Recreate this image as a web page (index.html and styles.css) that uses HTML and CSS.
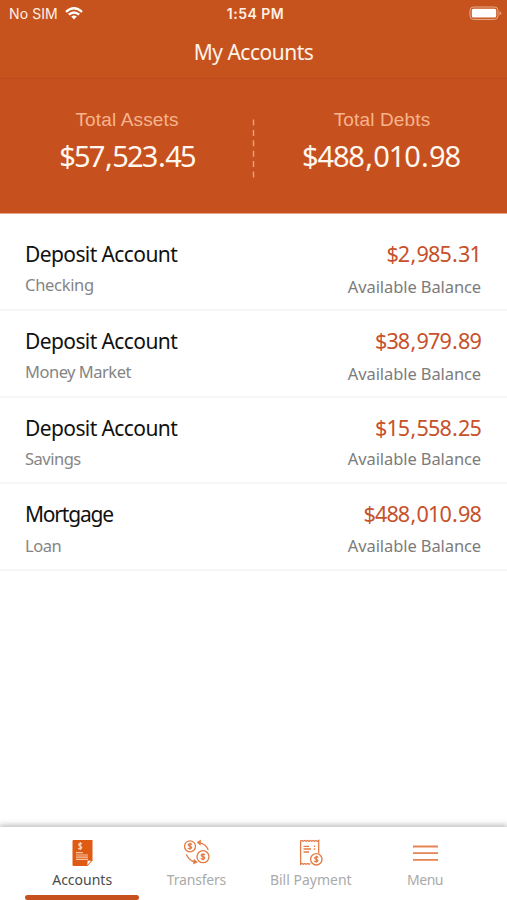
FILE: index.html
```html
<!DOCTYPE html>
<html lang="en">
<head>
<meta charset="utf-8">
<title>My Accounts</title>
<link rel="stylesheet" href="styles.css">
</head>
<body>
<div class="app">
  <header class="top">
    <div class="status">
      <div class="carrier"><span>No SIM</span>
        <svg class="wifi" width="18" height="13" viewBox="0 0 18 13" fill="none" stroke="#fff" stroke-width="2.3"><path d="M1 4.8Q9-2.2 17 4.8"/><path d="M3.8 7.7Q9 3.2 14.2 7.7"/><path d="M9 12.4 6.2 9.6Q9 7.4 11.8 9.6Z" fill="#fff" stroke="none"/></svg>
      </div>
      <div class="time">1:54 PM</div>
      <svg class="battery" width="33" height="15" viewBox="0 0 33 15"><rect x="1" y="1" width="28" height="12.4" rx="3.5" fill="none" stroke="#e9ae90"/><rect x="2.8" y="2.8" width="24.4" height="8.8" rx="1.6" fill="#fff"/><path d="M30.5 5v4.4q1.7-.7 1.7-2.2T30.5 5z" fill="#e9a080"/></svg>
    </div>
    <h1 class="title">My Accounts</h1>
  </header>
  <section class="summary">
    <div class="total"><div class="total-label">Total Assets</div><div class="total-value assets">$57<i>,</i>523<i>.</i>45</div></div>
    <svg class="divider" width="3" height="60" viewBox="0 0 3 60"><path d="M1.500 .5v60" stroke="#eba37e" stroke-width="1.4" stroke-dasharray="6 4.4"/></svg>
    <div class="total"><div class="total-label">Total Debts</div><div class="total-value">$488<i>,</i>010<i>.</i>98</div></div>
  </section>
  <main class="list">
    <div class="row"><div class="left"><div class="name">Deposit Account</div><div class="kind checking">Checking</div></div><div class="right"><div class="amount">$2<i>,</i>985<i>.</i>31</div><div class="note low">Available Balance</div></div></div>
    <div class="row"><div class="left"><div class="name">Deposit Account</div><div class="kind">Money Market</div></div><div class="right"><div class="amount">$38<i>,</i>979<i>.</i>89</div><div class="note low">Available Balance</div></div></div>
    <div class="row"><div class="left"><div class="name">Deposit Account</div><div class="kind">Savings</div></div><div class="right"><div class="amount">$15<i>,</i>558<i>.</i>25</div><div class="note">Available Balance</div></div></div>
    <div class="row loan"><div class="left"><div class="name mortgage">Mortgage</div><div class="kind">Loan</div></div><div class="right"><div class="amount">$488<i>,</i>010<i>.</i>98</div><div class="note">Available Balance</div></div></div>
  </main>
  <nav class="tabs">
    <a class="tab active">
      <svg width="28" height="28" viewBox="0 0 28 28"><path d="M5.5 1h19v20.5L19 27H5.5q-1 0-1-1V2q0-1 1-1z" fill="#df5a12"/><path d="M24 21.3h-3.500q-1.500 0-1.500 1.500V27z" fill="#fff" stroke="#df5a12" stroke-width=".8"/><path d="M8 13.700h7M8 16h12M8 18.200h12M8 20.300h12" stroke="#f6c5a6" stroke-width="1.200"/><path d="M14 5q-1.500-1-2.700-.3-1.300 1.200.3 2.100l1.300.7q1.500 1 0 2.200-1.300.6-2.800-.5M12.200 3v8" fill="none" stroke="#fbd9c5" stroke-width="1.200"/></svg>
      <span>Accounts</span></a>
    <a class="tab transfers">
      <svg width="28" height="28" viewBox="0 0 28 28" fill="none" stroke="#e37b45" stroke-width="1.300"><circle cx="8" cy="7.300" r="5.500"/><circle cx="21" cy="17.700" r="6"/><path d="M10 5.600q-1-1-2.300-.8-1.700.4-1.400 1.500.3.700 1.700 1t1.600 1.200q0 1.100-1.600 1.300T5.800 9M8 3.800v7M23 16q-1-1-2.300-.8-1.700.4-1.400 1.500.3.700 1.700 1t1.600 1.200q0 1.100-1.600 1.300t-2.200-.8M21 14.200v7"/><path d="M26.300 11Q24 5 17.500 3.800M4.300 15.500Q7.500 22 13 23"/><path d="m18.800 1-3.800 2.300 3.300 3zM12 20.300l3.500 3-4.100 1.700z" fill="#e37b45" stroke-width=".5"/></svg>
      <span>Transfers</span></a>
    <a class="tab">
      <svg width="28" height="28" viewBox="0 0 28 28" fill="none" stroke="#e37b45" stroke-width="1.300"><path d="M21.700 14.500V1.500l-1.300.8-1.400-.8-1.400.8-1.400-.8-1.400.8-1.400-.8-1.400.8-1.400-.8-1.400.8-1.400-.8-1.400.8-1.400-.8-1.400.5V25.300l1.400-.8 1.400.8 1.400-.8 1.400.8 1.400-.8 1.400.8 1.400-.8"/><path d="M6.500 7.300H12M6.500 10H14M6.500 13H12M17.500 6.500V8M17.500 9.300v1.500"/><circle cx="19.300" cy="20.300" r="5.700"/><path d="M21.200 18.500q-1-1-2.200-.7-1.600.5-1.200 1.600.3.700 1.600.9 1.500.5 1.500 1.300 0 1-1.600 1.200-1.200 0-2-.8M19.300 16.800v7"/></svg>
      <span>Bill Payment</span></a>
    <a class="tab menu">
      <svg width="28" height="28" viewBox="0 0 28 28"><path d="M2 7.500h25M2 14.200h25M2 20.900h25" stroke="#e58453" stroke-width="1.800"/></svg>
      <span>Menu</span></a>
  </nav>
</div>
</body>
</html>
```
FILE: styles.css
```css
* { box-sizing: border-box; }
body { margin: 0; background: #fff; font-family: "Noto Sans", sans-serif; }
i { font-style: normal; padding: 0 .05em; }
.app { height: 900px; display: flex; flex-direction: column; overflow: hidden; }
.top { height: 79px; background: #c6531d; color: #fff; border-bottom: 1px solid #bd4b1b; }
.status { height: 27px; display: grid; grid-template-columns: 1fr auto 1fr; align-items: center; padding: 0 5px 0 9px; font: 14px/27px Inter, sans-serif; }
.carrier { display: flex; align-items: center; gap: 7px; color: #fff0e5; letter-spacing: .1px; }
.time { font-weight: 600; color: #fff0e5; letter-spacing: .5px; }
.battery { justify-self: end; }
.title { margin: 10px 0 0; font-size: 21px; line-height: 30px; font-weight: 400; text-align: center; color: #fff3e9; letter-spacing: -.5px; }
.summary { height: 135px; background: #c7501f; display: grid; grid-template-columns: 1fr 3px 1fr; padding-top: 29px; border-bottom: 1px solid #e6a98f; }
.total { text-align: center; }
.total-label { font: 19px/24px "Liberation Sans", sans-serif; color: #f6b48d; letter-spacing: .15px; padding-left: 2px; }
.total-value { font-size: 29px; line-height: 40px; margin-top: 4px; color: #fff8ef; letter-spacing: -1.15px; }
.assets { letter-spacing: -1.85px; padding-left: 2px; }
.divider { margin-top: 11px; }
.list { flex: 1; padding-top: 10px; }
.row { height: 86.8px; display: flex; justify-content: space-between; padding: 16px 26px 0 25px; border-bottom: 2px solid #f6f6f6; }
.name, .amount { font-size: 21px; line-height: 28px; color: #111; letter-spacing: -.6px; }
.mortgage { letter-spacing: -1.2px; }
.amount { font-size: 21.6px; color: #c6512b; text-align: right; letter-spacing: -.04em; }
.kind, .note { font-size: 16.5px; line-height: 24px; margin-top: 5px; color: #858585; letter-spacing: -.5px; }
.checking { letter-spacing: -.3px; }
.note { color: #7c7c7c; letter-spacing: -.1px; }
.low { margin-top: 7px; }
.loan .kind, .loan .note { margin-top: 6px; }
.tabs { height: 73px; display: grid; grid-template-columns: repeat(4, 114.3px); padding-left: 25px; background: #fff; box-shadow: 0 -1px 6px 1px #bdbdbd; }
.tab { display: flex; flex-direction: column; align-items: center; padding-top: 12px; font-size: 14px; line-height: 20px; color: #aaa; border-bottom: 5px solid transparent; }
.tab span { margin-top: 3px; }
.transfers { letter-spacing: -.2px; }
.menu { letter-spacing: -.5px; }
.active { color: #4c4c4c; position: relative; }
.active::after { content: ""; position: absolute; left: 0; right: 0; bottom: -5px; height: 5px; border-radius: 2.5px; background: #c7501f; }
```
